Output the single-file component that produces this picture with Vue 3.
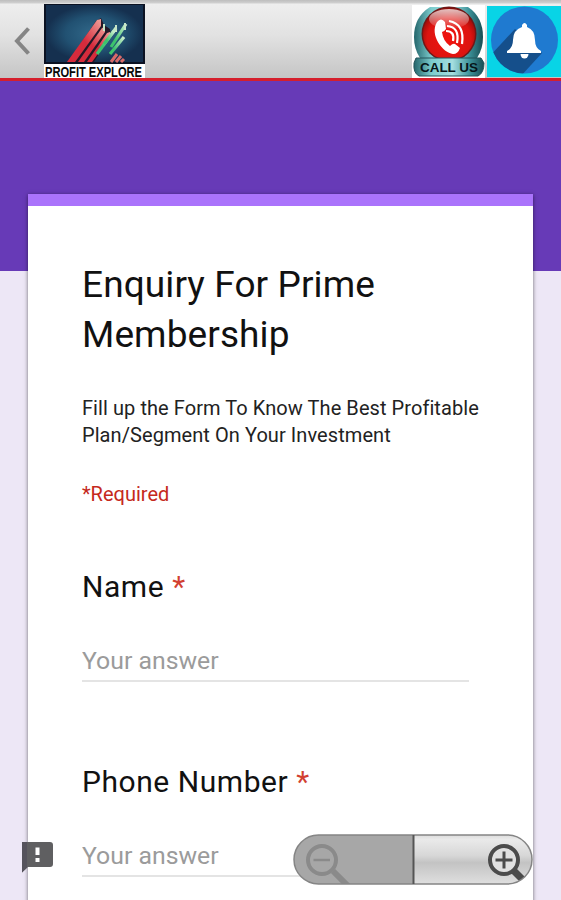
<script setup>
import { ref } from 'vue'

const fields = ref([
  { id: 'name', label: 'Name', value: '' },
  { id: 'phone', label: 'Phone Number', value: '' }
])
</script>

<template>
  <div class="screen">
    <header class="toolbar">
      <svg class="back" width="44" height="78" viewBox="0 0 44 78">
        <path d="M28.500 28.500 L17 41 L28.500 53.500" fill="none" stroke="#858585" stroke-width="4" />
      </svg>
      <svg class="logo" width="101" height="74" viewBox="0 0 101 74">
        <defs>
          <radialGradient id="night">
            <stop offset="0" stop-color="#32698a" />
            <stop offset="0.600" stop-color="#215172" />
            <stop offset="1" stop-color="#15304f" />
          </radialGradient>
          <linearGradient id="redBar" x1="0" y1="1" x2="1" y2="0">
            <stop offset="0.500" stop-color="#d62b3c" />
            <stop offset="1" stop-color="#efa19b" />
          </linearGradient>
          <linearGradient id="greenBar" x1="0" y1="1" x2="1" y2="0">
            <stop offset="0.300" stop-color="#3cc46d" />
            <stop offset="1" stop-color="#cfeed0" />
          </linearGradient>
        </defs>
        <rect width="101" height="74" fill="#fff" />
        <rect width="101" height="60" fill="#0b1222" />
        <rect x="2" y="1" width="97" height="57" fill="url(#night)" />
        <path d="M24 58 L52 17 L57 14 L60 21 L66 25 L67 31 L50 58 Z" fill="#241827" />
        <g fill="url(#redBar)">
          <path d="M23 58 L53 16 L57 15 L57 22 L31 58 Z" />
          <path d="M34 58 L58 24 L61 23 L61 28 L40 58 Z" />
          <path d="M43 58 L63 29 L66 28 L66 33 L48 58 Z" />
        </g>
        <g stroke="url(#greenBar)" stroke-width="3.200" fill="none">
          <path d="M53 50 L72 24" />
          <path d="M60 40 L70 27" />
          <path d="M67 43 L82 20" />
          <path d="M66 50 L80 33" />
        </g>
        <path d="M60 20 V27 M72 21 V28 M81 19 V26" stroke="#c8e6c8" stroke-width="2" />
        <path d="M67 58 L73 50 M72 58 L77 52 M77 58 L80 55" stroke="#d96a69" stroke-width="3" />
        <text x="1" y="72.500" textLength="97" lengthAdjust="spacingAndGlyphs">PROFIT EXPLORE</text>
      </svg>
      <div class="actions">
        <svg width="73" height="73" viewBox="0 0 73 73">
          <defs>
            <linearGradient id="teal" x1="0" y1="0" x2="1" y2="0">
              <stop offset="0" stop-color="#23656b" />
              <stop offset="0.250" stop-color="#7bcccd" />
              <stop offset="0.550" stop-color="#a4dedf" />
              <stop offset="0.800" stop-color="#3c9299" />
              <stop offset="1" stop-color="#174b51" />
            </linearGradient>
            <radialGradient id="redBall" cx="0.500" cy="0.600" r="0.600">
              <stop offset="0" stop-color="#f2130f" />
              <stop offset="0.700" stop-color="#dc1410" />
              <stop offset="1" stop-color="#8e0a07" />
            </radialGradient>
            <linearGradient id="gloss" x1="0" y1="0" x2="0" y2="1">
              <stop offset="0" stop-color="#fff" stop-opacity="0.750" />
              <stop offset="1" stop-color="#fff" stop-opacity="0.050" />
            </linearGradient>
          </defs>
          <rect width="73" height="73" fill="#fff" />
          <path d="M18 2 H56 Q71 12 71 32 Q71 44 65 53 H8 Q2 44 2 32 Q2 12 18 2 Z" fill="url(#teal)" />
          <circle cx="37" cy="29" r="27.500" fill="#701716" />
          <circle cx="37" cy="29" r="26" fill="url(#redBall)" />
          <ellipse cx="37" cy="14" rx="20" ry="10" fill="url(#gloss)" />
          <path d="M25 17 Q29 12 33 17 L34 24 Q32 27 30 27 Q31 36 38 41 Q41 38 43 39 L48 43 Q46 49 41 49 C31 48 17 30 25 17 Z" fill="#fff" />
          <path d="M34 26 Q43 26 41 36 M35 21 Q48 22 45 38 M37 16 Q53 19 50 39" fill="none" stroke="#fff" stroke-width="2.200" />
          <path d="M4 53 H69 L72 58 Q72 68 66 71 H7 Q1 68 2 58 Z" fill="url(#teal)" stroke="#23545a" stroke-width="1" />
          <text class="call" x="8" y="66.500" textLength="58" lengthAdjust="spacing">CALL US</text>
        </svg>
        <svg width="74" height="71" viewBox="0 0 74 71">
          <rect width="74" height="71" fill="#08d4e6" />
          <clipPath id="disc"><circle cx="37.500" cy="34" r="33.500" /></clipPath>
          <g clip-path="url(#disc)">
            <rect width="74" height="71" fill="#1f7ad0" />
            <path d="M28 23 L0 53 V71 H33 L55 47 Z" fill="#154f8b" />
          </g>
          <path d="M35 21 V19 Q37.500 15 40 19 V21 Q48 24 48 34 Q48 42 54 45 V47 H20 V45 Q26 42 26 34 Q26 24 35 21 Z" fill="#fff" />
          <path d="M33.500 48 A4 4.500 0 0 0 41.500 48 Z" fill="#fff" />
        </svg>
      </div>
    </header>

    <main class="page">
      <form class="card">
        <h1 class="title">Enquiry For Prime Membership</h1>
        <p class="description">
          Fill up the Form To Know The Best Profitable<br />Plan/Segment On Your Investment
        </p>
        <p class="required">*Required</p>
        <div v-for="field in fields" :key="field.id" class="field">
          <label :for="field.id" class="label">{{ field.label }} <span class="star">*</span></label>
          <input :id="field.id" v-model="field.value" class="input" placeholder="Your answer" />
        </div>
      </form>
    </main>

    <svg class="report" width="32" height="32" viewBox="0 0 32 32">
      <path d="M0 1 H28 Q31 1 31 4 V23 Q31 26 28 26 H6 L0 31.500 Z" fill="#5f5f61" />
      <path d="M0 1 H5 V26.500 L0 31.500 Z" fill="#55535c" />
      <path d="M13.500 6.500 H17.500 V14 H13.500 Z M13.500 17 H17.500 V21 H13.500 Z" fill="#fff" />
    </svg>

    <svg class="zoom" width="242" height="54" viewBox="0 0 242 54">
      <defs>
        <linearGradient id="metal" x1="0" y1="0" x2="0" y2="1">
          <stop offset="0" stop-color="#d6d6d6" />
          <stop offset="0.120" stop-color="#eaeaea" />
          <stop offset="0.420" stop-color="#d7d7d7" />
          <stop offset="0.550" stop-color="#c3c3c3" />
          <stop offset="1" stop-color="#e3e3e3" />
        </linearGradient>
        <clipPath id="pill"><rect x="1" y="2" width="238" height="49" rx="24.500" /></clipPath>
      </defs>
      <g clip-path="url(#pill)">
        <rect width="121" height="54" fill="#a7a7a7" />
        <rect x="121" width="121" height="54" fill="url(#metal)" />
        <g fill="none" stroke="#8a8a8a">
          <circle cx="29" cy="27" r="14" stroke-width="4" />
          <path d="M40 38 L56 54" stroke-width="6" />
          <path d="M20.500 27 H37" stroke-width="2.500" />
        </g>
        <g fill="none" stroke="#4b4b4b">
          <path d="M221 38 L234 51" stroke-width="7" />
          <circle cx="211" cy="27" r="14" fill="#e0e0e0" stroke-width="4" />
          <path d="M202.500 27 H219.500 M211 18.500 V35.500" stroke-width="3" />
        </g>
      </g>
      <rect x="1" y="2" width="238" height="49" rx="24.500" fill="none" stroke="#858585" stroke-width="1.500" />
      <path d="M120.500 2 V51" stroke="#555" stroke-width="2" />
    </svg>
  </div>
</template>

<style>
body {
  margin: 0;
  overflow: hidden;
}
</style>

<style scoped>
.screen {
  position: relative;
  width: 561px;
  height: 900px;
  overflow: hidden;
  box-sizing: border-box;
  font-family: Roboto, sans-serif;
  color: #111;
}

.toolbar {
  display: flex;
  align-items: flex-start;
  box-sizing: border-box;
  height: 81px;
  padding-top: 4px;
  border-bottom: 3px solid #d51f2c;
  background: linear-gradient(#bdbdbd 0, #d0d0d0 3px, #eee 4px, #e2e2e2 35px, #c5c5c5 78px);
}

.back {
  margin-top: -4px;
}

.logo text {
  font: bold 15px 'Liberation Sans', sans-serif;
  fill: #080808;
}

.actions {
  display: flex;
  gap: 2px;
  margin: 2px 0 0 auto;
}

.actions svg:first-child {
  margin-top: -1px;
}

.call {
  font: bold 13.5px 'Liberation Sans', sans-serif;
  fill: #071619;
}

.page {
  height: 819px;
  box-sizing: border-box;
  padding: 113px 28px 0;
  background: linear-gradient(#673ab7 190px, #ede7f6 190px);
}

.card {
  height: 760px;
  box-sizing: border-box;
  padding: 54px 50px 0 54px;
  border-top: 12px solid #aa73fb;
  background: #fff;
  box-shadow: 0 1px 4px rgba(0, 0, 0, 0.55);
}

.title {
  width: 330px;
  margin: 0;
  font-size: 37px;
  font-weight: 400;
  line-height: 50px;
  letter-spacing: 0.1px;
}

.description {
  margin: 35px 0 0;
  font-size: 20px;
  line-height: 27px;
  letter-spacing: 0.07px;
  white-space: nowrap;
  color: #222;
}

.required {
  margin: 32px 0 59px;
  font-size: 20px;
  line-height: 27px;
  color: #c5291c;
}

.field {
  display: flex;
  flex-direction: column;
  width: 387px;
  height: 195px;
}

.label {
  font-size: 30px;
  line-height: 40px;
  letter-spacing: 0.55px;
}

.star {
  color: #d23f31;
}

.input {
  box-sizing: border-box;
  height: 38px;
  margin: 37px 0 0;
  padding: 0 0 4px;
  border: 0;
  border-bottom: 2px solid #e4e4e4;
  outline: 0;
  font: 24.8px Roboto, sans-serif;
}

.input::placeholder {
  color: #9b9b9b;
  opacity: 1;
}

.report {
  position: absolute;
  left: 22px;
  top: 841px;
}

.zoom {
  position: absolute;
  left: 293px;
  top: 833px;
}
</style>
